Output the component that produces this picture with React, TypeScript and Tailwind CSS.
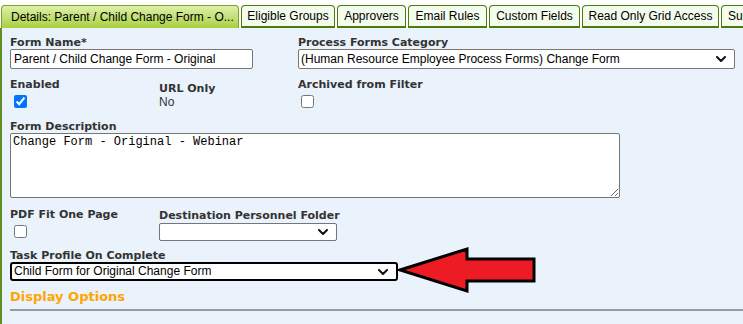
import React from "react";

const tabs = [
  { label: "Eligible Groups", w: "w-[94px] justify-center" },
  { label: "Approvers", w: "w-[69px] justify-center" },
  { label: "Email Rules", w: "w-[79px] justify-center" },
  { label: "Custom Fields", w: "w-[91px] justify-center" },
  { label: "Read Only Grid Access", w: "w-[137px] justify-center" },
  { label: "Su", w: "w-[40px] pl-[6px]" },
];

function Chevron() {
  return (
    <svg viewBox="0 0 10 6" className="h-[6px] w-[10px]" fill="none">
      <path d="M1 1l4 4 4-4" stroke="#111" strokeWidth="2" strokeLinecap="round" strokeLinejoin="round" />
    </svg>
  );
}

function Select({ value, className, focused }: { value: string; className: string; focused?: boolean }) {
  return (
    <div
      className={`flex items-center justify-between bg-white pl-[2px] pr-[8px] text-[12px] text-black ${
        focused ? "rounded-[3px] border-2 border-black" : "rounded-[2px] border border-[#767676]"
      } ${className}`}
    >
      <span className="truncate">{value}</span>
      <Chevron />
    </div>
  );
}

export default function App() {
  return (
    <div className="relative h-[324px] w-[743px] overflow-hidden bg-white font-['Liberation_Sans',Arial,sans-serif]">
      {/* Tab strip */}
      <div className="flex gap-[2px] whitespace-nowrap pl-[1px] pt-[5px] text-[12px] text-black">
        <div className="flex h-[23px] w-[238px] shrink-0 items-center rounded-t-[4px] border border-b-0 border-[#7aa52c] bg-gradient-to-b from-[#dff0a8] to-[#a9cf3a] pl-[9px]">
          Details: Parent / Child Change Form - O...
        </div>
        {tabs.map((t) => (
          <div
            key={t.label}
            className={`flex h-[23px] shrink-0 items-center rounded-t-[4px] border border-b-2 border-[#4e7a12] bg-[#f3fbec] ${t.w}`}
          >
            {t.label}
          </div>
        ))}
      </div>

      {/* Form body */}
      <div className="h-[296px] border-l-2 border-[#5f8f22] bg-[#eaf2fb] pl-[8px] font-['DejaVu_Sans',Verdana,sans-serif] text-[11px] leading-[13px] text-[#333]">
        {/* Row 1 */}
        <div className="flex pt-[8px]">
          <div className="w-[288px]">
            <div className="font-bold">Form Name*</div>
            <input
              readOnly
              value="Parent / Child Change Form - Original"
              className="h-[20px] w-[243px] rounded-[2px] border border-[#767676] bg-white px-[3px] font-['Liberation_Sans',Arial,sans-serif] text-[12px] text-black outline-none"
            />
          </div>
          <div>
            <div className="font-bold">Process Forms Category</div>
            <Select
              value="(Human Resource Employee Process Forms) Change Form"
              className="h-[20px] w-[437px] font-['Liberation_Sans',Arial,sans-serif]"
            />
          </div>
        </div>

        {/* Row 2 */}
        <div className="mt-[9px] flex">
          <div className="w-[149px]">
            <div className="font-bold">Enabled</div>
            <input type="checkbox" defaultChecked className="ml-[4px] mt-[4px] block h-[13px] w-[13px]" />
          </div>
          <div className="w-[139px] pt-[4px]">
            <div className="font-bold">URL Only</div>
            <div className="font-['Liberation_Sans',Arial,sans-serif] text-[12px] leading-[14px]">No</div>
          </div>
          <div>
            <div className="font-bold">Archived from Filter</div>
            <input type="checkbox" className="ml-[3px] mt-[4px] block h-[13px] w-[13px]" />
          </div>
        </div>

        {/* Description */}
        <div className="mt-[11px]">
          <div className="font-bold">Form Description</div>
          <textarea
            readOnly
            value="Change Form - Original - Webinar"
            className="block h-[65px] w-[610px] rounded-[2px] border border-[#767676] bg-white px-[2px] py-[1px] font-['Liberation_Mono',Consolas,monospace] text-[12px] leading-[15px] text-black outline-none"
          />
        </div>

        {/* Row 4 */}
        <div className="mt-[10px] flex">
          <div className="w-[149px]">
            <div className="font-bold">PDF Fit One Page</div>
            <input type="checkbox" className="ml-[4px] mt-[4px] block h-[13px] w-[13px]" />
          </div>
          <div className="pt-[1px]">
            <div className="font-bold">Destination Personnel Folder</div>
            <Select value="" className="mt-[1px] h-[18px] w-[178px]" />
          </div>
        </div>

        {/* Task profile */}
        <div className="mt-[8px]">
          <div className="font-bold">Task Profile On Complete</div>
          <Select
            value="Child Form for Original Change Form"
            focused
            className="h-[19px] w-[388px] font-['Liberation_Sans',Arial,sans-serif]"
          />
        </div>

        {/* Display options */}
        <div className="mt-[8px] text-[13px] font-bold leading-[16px] text-[#ffa500]">Display Options</div>
        <div className="mt-[4px] h-[2px] bg-[#9a9a9a]" />
      </div>

      {/* Callout arrow */}
      <svg className="absolute left-[396px] top-[245px] h-[50px] w-[142px]" viewBox="396 245 142 50">
        <polygon
          points="400,270 467,249 467,259 534,259 534,281 467,281 467,291"
          fill="#ed1c24"
          stroke="#000"
          strokeWidth="3"
          strokeLinejoin="miter"
        />
      </svg>
    </div>
  );
}
